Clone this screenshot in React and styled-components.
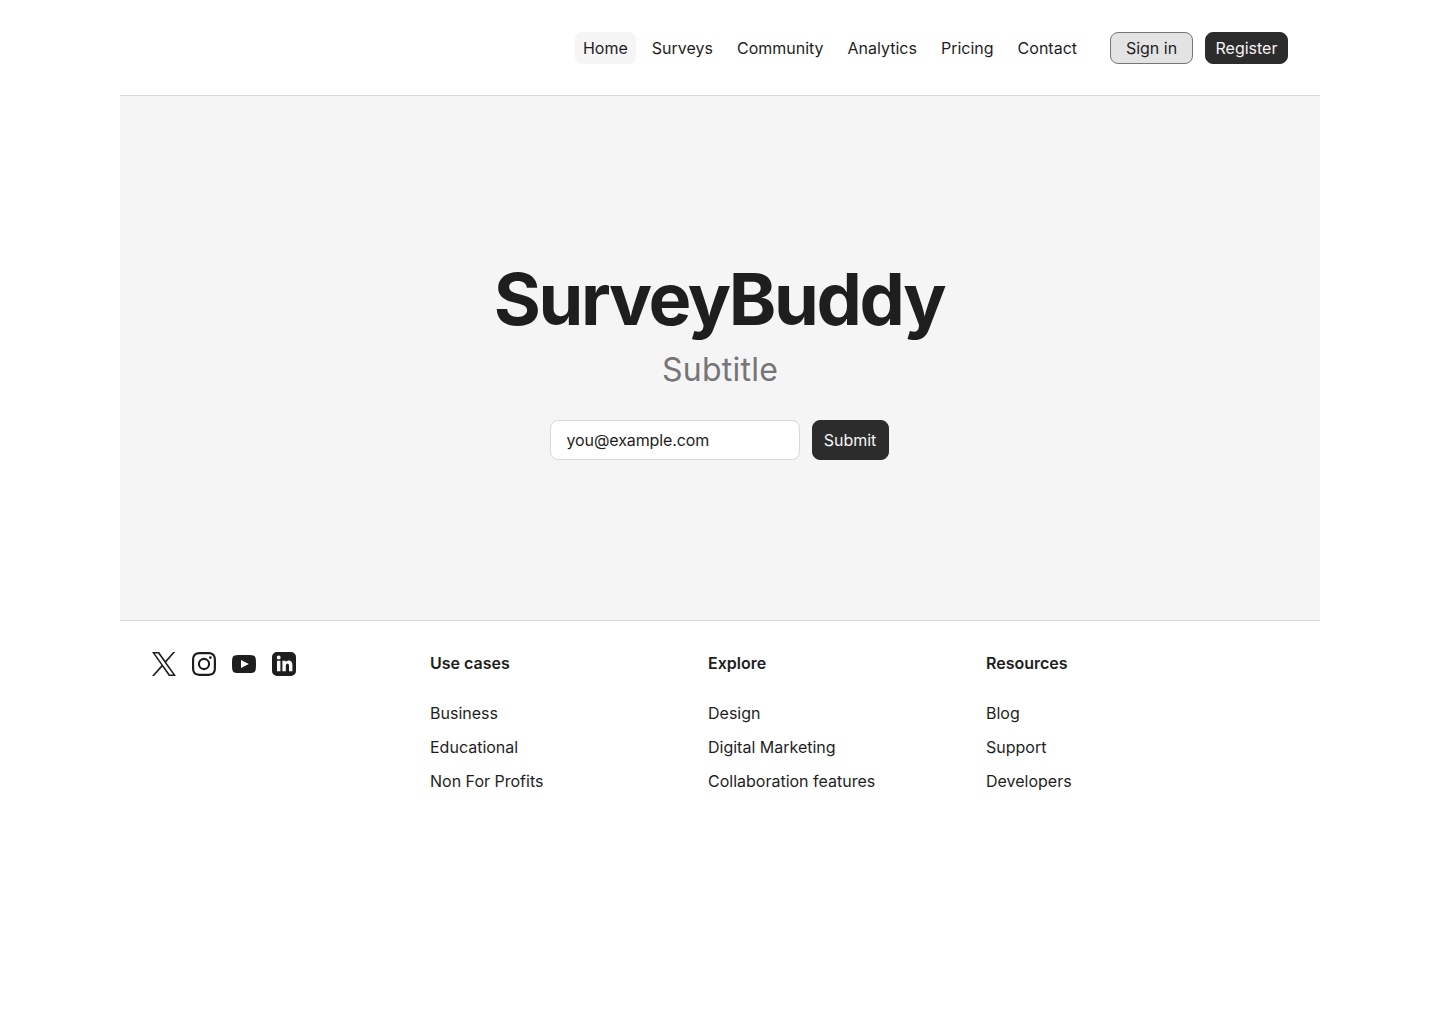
import React from "react";
import styled, { createGlobalStyle } from "styled-components";

const GlobalStyle = createGlobalStyle`
  *, *::before, *::after { box-sizing: border-box; }
  body { margin: 0; background: #fff; color: #1e1e1e; font-family: Inter, sans-serif; font-size: 16px; font-weight: 400; }
`;
const Page = styled.div`
  width: 1200px;
  margin: 0 auto;
`;
const Header = styled.header`
  display: flex;
  align-items: center;
  justify-content: flex-end;
  height: 96px;
  padding: 0 32px;
  border-bottom: 1px solid #d9d9d9;
`;
const Nav = styled.nav`
  display: flex;
  gap: 8px;
  margin-right: 25px;
`;
const NavLink = styled.a`
  padding: 8px;
  border-radius: 8px;
  line-height: 16px;
  white-space: nowrap;
  background: ${(p) => (p.$active ? "#f5f5f5" : "transparent")};
`;
const Actions = styled.div`
  display: flex;
  gap: 12px;
`;
const Button = styled.button`
  display: flex;
  align-items: center;
  justify-content: center;
  width: ${(p) => p.$width}px;
  height: ${(p) => p.$height}px;
  padding: 0;
  border: 1px solid ${(p) => (p.$neutral ? "#767676" : "#2c2c2c")};
  border-radius: 8px;
  background: ${(p) => (p.$neutral ? "#e3e3e3" : "#2c2c2c")};
  color: ${(p) => (p.$neutral ? "#1e1e1e" : "#f5f5f5")};
  font: inherit;
  line-height: 16px;
`;
const Hero = styled.main`
  display: flex;
  flex-direction: column;
  align-items: center;
  height: 524px;
  padding-top: 160px;
  background: #f5f5f5;
`;
const Title = styled.h1`
  margin: 0;
  padding-right: 2px;
  font-size: 72px;
  font-weight: 700;
  line-height: 86px;
  letter-spacing: -2.4px;
`;
const Subtitle = styled.p`
  margin: 9px 0 0;
  color: #757575;
  font-size: 32px;
  line-height: 38px;
  letter-spacing: 0.25px;
`;
const Form = styled.form`
  display: flex;
  gap: 12px;
  margin-top: 31px;
  padding-right: 2px;
`;
const Input = styled.input`
  width: 250px;
  height: 40px;
  padding: 0 16px;
  border: 1px solid #d9d9d9;
  border-radius: 8px;
  background: #fff;
  color: #1e1e1e;
  font: inherit;
  letter-spacing: -0.1px;
`;
const Footer = styled.footer`
  display: grid;
  grid-template-columns: repeat(4, 262px);
  gap: 16px;
  padding: 31px 32px 160px;
  border-top: 1px solid #d9d9d9;
`;
const Socials = styled.div`
  display: flex;
  gap: 16px;
`;
const Icon = styled.svg`
  display: block;
  width: 24px;
  height: 24px;
  fill: #1e1e1e;
`;
const ColumnTitle = styled.h2`
  margin: 0 0 28px;
  font-size: 16px;
  font-weight: 600;
  line-height: 22px;
`;
const Links = styled.ul`
  display: flex;
  flex-direction: column;
  gap: 12px;
  margin: 0;
  padding: 0;
  list-style: none;
`;
const LinkItem = styled.li`
  line-height: 22px;
`;

const navItems = ["Home", "Surveys", "Community", "Analytics", "Pricing", "Contact"];
const columns = [
  { title: "Use cases", links: ["Business", "Educational", "Non For Profits"] },
  { title: "Explore", links: ["Design", "Digital Marketing", "Collaboration features"] },
  { title: "Resources", links: ["Blog", "Support", "Developers"] },
];

export default function App() {
  return (
    <>
      <GlobalStyle />
      <Page>
        <Header>
          <Nav>
            {navItems.map((item, i) => (
              <NavLink key={item} $active={i === 0}>{item}</NavLink>
            ))}
          </Nav>
          <Actions>
            <Button $neutral $width={83} $height={32}>Sign in</Button>
            <Button $width={83} $height={32}>Register</Button>
          </Actions>
        </Header>
        <Hero>
          <Title>SurveyBuddy</Title>
          <Subtitle>Subtitle</Subtitle>
          <Form onSubmit={(e) => e.preventDefault()}>
            <Input type="email" defaultValue="you@example.com" />
            <Button $width={77} $height={40}>Submit</Button>
          </Form>
        </Hero>
        <Footer>
          <Socials>
            <Icon viewBox="0 0 24 24" aria-label="X">
              <path d="M14.28 10.16 23.22 0H21.1l-7.76 8.82L7.15 0H0l9.37 13.34L0 24h2.12l8.2-9.32L16.85 24H24l-9.72-13.84Zm-2.9 3.3-.95-1.33L2.88 1.56h3.25l6.1 8.54.95 1.33 7.93 11.1h-3.25l-6.48-9.07Z" />
            </Icon>
            <Icon viewBox="0 0 24 24" aria-label="Instagram">
              <path d="M12 2.16c3.2 0 3.58.02 4.85.07 1.17.05 1.8.25 2.23.41.56.22.96.48 1.38.9.42.42.68.82.9 1.38.16.42.36 1.06.41 2.23.06 1.27.07 1.65.07 4.85s-.01 3.58-.07 4.85c-.05 1.17-.25 1.8-.41 2.23-.22.56-.48.96-.9 1.38-.42.42-.82.68-1.38.9-.42.16-1.06.36-2.23.41-1.27.06-1.65.07-4.85.07s-3.58-.01-4.85-.07c-1.17-.05-1.8-.25-2.23-.41a3.7 3.7 0 0 1-1.38-.9 3.7 3.7 0 0 1-.9-1.38c-.16-.42-.36-1.06-.41-2.23-.06-1.27-.07-1.65-.07-4.85s.01-3.58.07-4.85c.05-1.17.25-1.8.41-2.23.22-.56.48-.96.9-1.38.42-.42.82-.68 1.38-.9.42-.16 1.06-.36 2.23-.41 1.27-.05 1.65-.07 4.85-.07M12 0C8.74 0 8.33.01 7.05.07 5.78.13 4.9.33 4.14.63a5.9 5.9 0 0 0-2.13 1.38A5.9 5.9 0 0 0 .63 4.14C.33 4.9.13 5.78.07 7.05.01 8.33 0 8.74 0 12s.01 3.67.07 4.95c.06 1.27.26 2.15.56 2.91a5.9 5.9 0 0 0 1.38 2.13 5.9 5.9 0 0 0 2.13 1.38c.76.3 1.64.5 2.91.56 1.28.06 1.69.07 4.95.07s3.67-.01 4.95-.07c1.27-.06 2.15-.26 2.91-.56a5.9 5.9 0 0 0 2.13-1.38 5.9 5.9 0 0 0 1.38-2.13c.3-.76.5-1.64.56-2.91.06-1.28.07-1.69.07-4.95s-.01-3.67-.07-4.95c-.06-1.27-.26-2.15-.56-2.91a5.9 5.9 0 0 0-1.38-2.13A5.9 5.9 0 0 0 19.86.63C19.1.33 18.22.13 16.95.07 15.67.01 15.26 0 12 0Zm0 5.84a6.16 6.16 0 1 0 0 12.32 6.16 6.16 0 0 0 0-12.32ZM12 16a4 4 0 1 1 0-8 4 4 0 0 1 0 8Zm6.4-11.85a1.44 1.44 0 1 0 0 2.88 1.44 1.44 0 0 0 0-2.88Z" />
            </Icon>
            <Icon viewBox="0 0 24 24" aria-label="YouTube">
              <path fillRule="evenodd" d="M12 3C17 3 19.2 3.1 20.6 3.3 22.5 3.6 23.4 4.8 23.7 6.6 24.1 9 24.1 15 23.7 17.4 23.4 19.2 22.5 20.4 20.6 20.7 19.2 20.9 17 21 12 21S4.8 20.9 3.4 20.7C1.5 20.4.6 19.2.3 17.4-.1 15-.1 9 .3 6.6.6 4.8 1.5 3.6 3.4 3.3 4.8 3.1 7 3 12 3ZM9 8v8l7.8-4L9 8Z" />
            </Icon>
            <Icon viewBox="0 0 24 24" aria-label="LinkedIn">
              <path fillRule="evenodd" d="M5 0h14a5 5 0 0 1 5 5v14a5 5 0 0 1-5 5H5a5 5 0 0 1-5-5V5a5 5 0 0 1 5-5Zm0 8.7V19.2h3.4V8.7H5Zm1.7-5.2a1.95 1.95 0 1 0 0 3.9 1.95 1.95 0 0 0 0-3.9ZM10.4 8.7v10.5h3.4V14c0-3.4 3.2-3.4 3.2-.2v5.4h3.4v-6.5c0-4.9-5-5-6.7-2.5V8.7h-3.3Z" />
            </Icon>
          </Socials>
          {columns.map((c) => (
            <div key={c.title}>
              <ColumnTitle>{c.title}</ColumnTitle>
              <Links>
                {c.links.map((l) => <LinkItem key={l}>{l}</LinkItem>)}
              </Links>
            </div>
          ))}
        </Footer>
      </Page>
    </>
  );
}
